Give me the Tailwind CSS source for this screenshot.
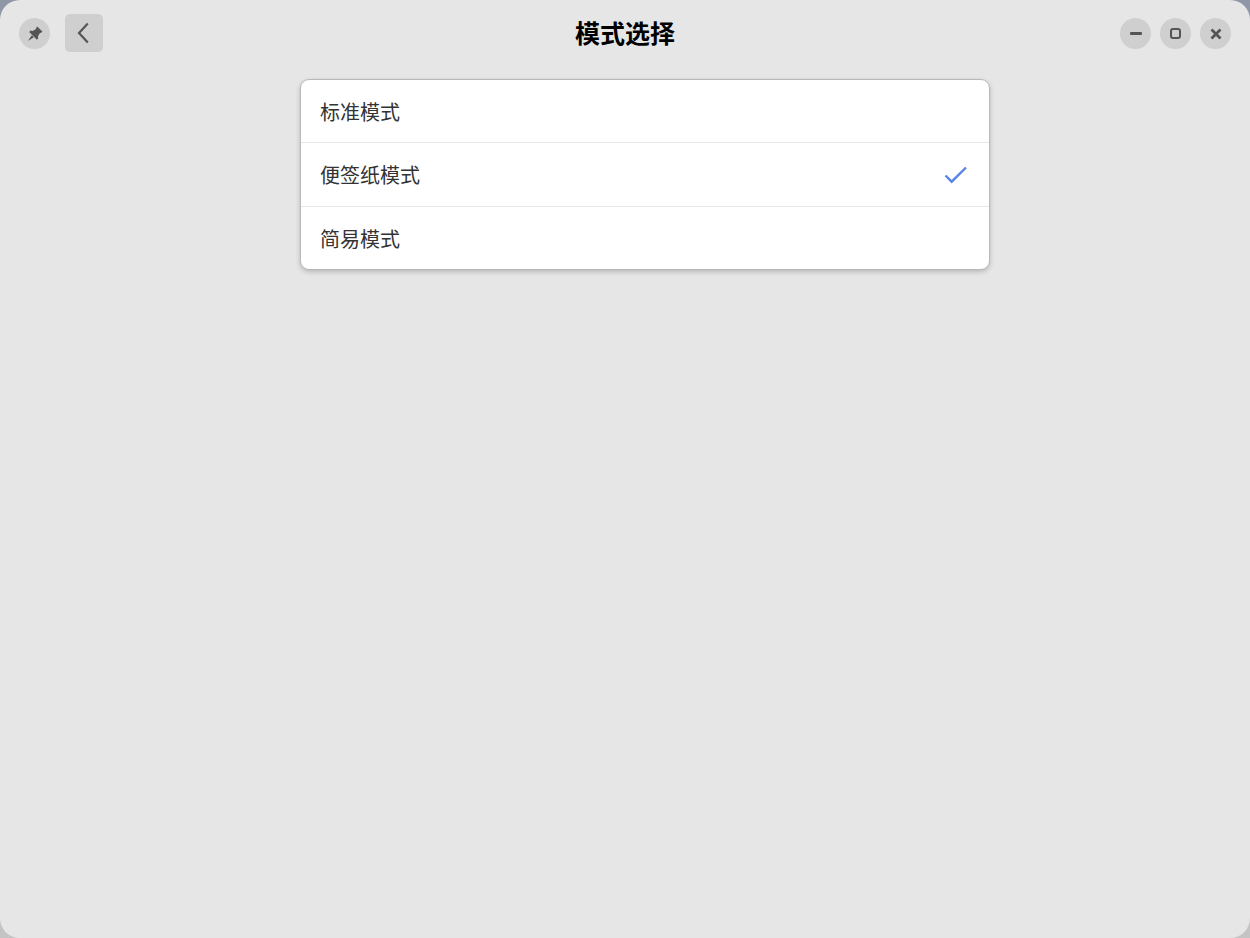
<!DOCTYPE html>
<html lang="zh"><head><meta charset="utf-8"><script src="https://cdn.jsdelivr.net/npm/@tailwindcss/browser@4"></script></head>
<body class="w-[1250px] h-[938px] overflow-hidden bg-gradient-to-b from-[#8f97a6] to-[#c4c4c4] font-['Noto_Sans_CJK_SC','Noto_Sans',sans-serif]">
<div class="w-[1250px] h-[938px] rounded-[20px] bg-[#e6e6e6] flex flex-col">
<header class="relative h-[66px] shrink-0 flex items-start pt-[18px] pl-[19px] pr-[19px]">
<button class="w-[31px] h-[31px] rounded-full bg-[#cfcfcf] flex items-center justify-center"><svg width="16" height="16" viewBox="0 0 16 16" fill="#555"><path d="M10.2 .4L15.4 5.6L14 6.9L13.2 6.7L10.9 10.2L11.3 12.3L9.9 13.7L2.2 6L3.6 4.6L5.8 5.1L9.3 2.8L9 2Z"/><path d="M4.8 9.2L6.8 11.2L.9 15.1Z"/></svg></button>
<button class="-mt-[4px] ml-[15px] w-[38px] h-[38px] rounded-[5px] bg-[#cfcfcf] flex items-center justify-center"><svg width="14" height="22" viewBox="0 0 14 22" fill="none" stroke="#555" stroke-width="2.2"><path d="M10.8 1.5L2 11l8.8 9.5"/></svg></button>
<h1 class="absolute left-0 right-0 top-[16px] text-center text-[25px] font-bold text-black leading-[32px]">模式选择</h1>
<div class="ml-auto flex gap-[9px]">
<button class="w-[31px] h-[31px] rounded-full bg-[#cfcfcf] flex items-center justify-center"><span class="w-[12px] h-[3px] rounded-[1px] bg-[#555]"></span></button>
<button class="w-[31px] h-[31px] rounded-full bg-[#cfcfcf] flex items-center justify-center"><span class="w-[11px] h-[11px] rounded-[3px] border-2 border-[#555]"></span></button>
<button class="w-[31px] h-[31px] rounded-full bg-[#cfcfcf] flex items-center justify-center"><svg width="12" height="12" viewBox="0 0 12 12" stroke="#555" stroke-width="2.8"><path d="M1.5 1.5l9 9M10.5 1.5l-9 9"/></svg></button>
</div>
</header>
<main class="flex justify-center pt-[13px] pl-[40px]">
<ul class="w-[690px] h-[191px] bg-white rounded-[9px] border border-[#b8b8b8] shadow-[0_2px_5px_rgba(0,0,0,0.2)] text-[20px] text-[#333333]">
<li class="h-[63px] flex items-center pl-[19px] pt-[2px] border-b border-[#e6e6e6]">标准模式</li>
<li class="h-[64px] flex items-center pl-[19px] pr-[21px] justify-between border-b border-[#e6e6e6]">便签纸模式<svg width="24" height="18" viewBox="0 0 24 18" fill="none" stroke="#5b84e4" stroke-width="2.4"><path d="M1.5 9.5l6.2 6.2L22 1.5"/></svg></li>
<li class="h-[62px] flex items-center pl-[19px] pt-[2px]">简易模式</li>
</ul>
</main>
</div>
</body></html>
